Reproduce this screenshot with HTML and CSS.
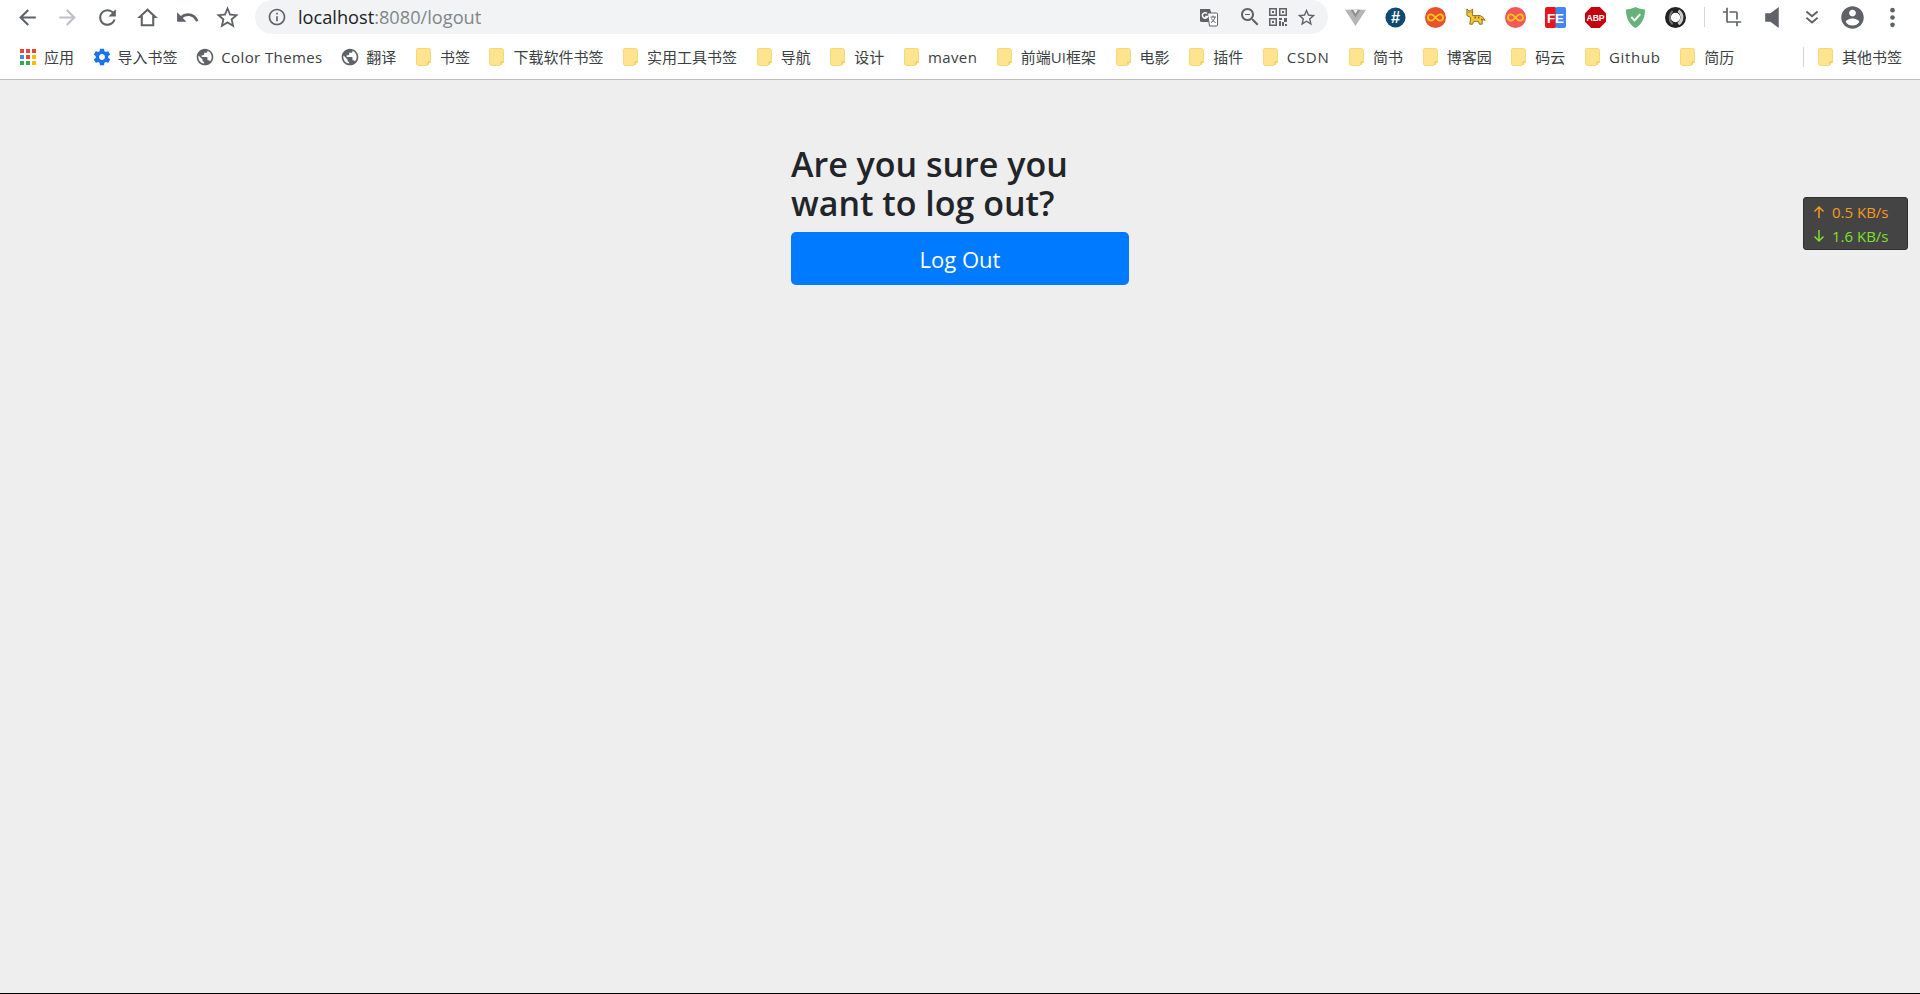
FILE: index.html
```html
<!DOCTYPE html>
<html lang="zh-CN">
<head>
<meta charset="utf-8">
<title>Log Out</title>
<link rel="stylesheet" href="styles.css">
</head>
<body>
<svg class="defs" width="0" height="0" aria-hidden="true">
  <defs>
    <symbol id="folder" viewBox="0 0 16 18">
      <path d="M1.500 .5h11a2 2 0 0 1 2 2v11l-3.500 4H2.500a2 2 0 0 1-2-2V1.500a1 1 0 0 1 1-1z" fill="#fee48f" stroke="#f8d775"/>
      <path d="M12 17v-3h3" fill="none" stroke="#f4cf62" stroke-width="1.400"/>
    </symbol>
    <symbol id="globe" viewBox="0 0 24 24">
      <path fill="#5f6368" d="M12 2C6.480 2 2 6.480 2 12s4.480 10 10 10 10-4.480 10-10S17.520 2 12 2zm-1 17.930c-3.950-.49-7-3.850-7-7.930 0-.62.08-1.210.21-1.790L9 15v1c0 1.100.9 2 2 2v1.930zm6.900-2.540c-.26-.81-1-1.390-1.900-1.390h-1v-3c0-.55-.45-1-1-1H8v-2h2c.55 0 1-.45 1-1V7h2c1.100 0 2-.9 2-2v-.41c2.930 1.190 5 4.060 5 7.410 0 2.080-.8 3.970-2.100 5.390z"/>
    </symbol>
    <symbol id="star" viewBox="0 0 24 24">
      <path fill="#5f6368" d="M22 9.240l-7.190-.62L12 2 9.190 8.630 2 9.240l5.460 4.730L5.820 21 12 17.270 18.180 21l-1.630-7.030L22 9.240zM12 15.400l-3.760 2.270 1-4.280-3.320-2.880 4.380-.38L12 6.100l1.710 4.040 4.380.38-3.320 2.880 1 4.280L12 15.400z"/>
    </symbol>
    <symbol id="inf" viewBox="0 0 20 20">
      <path fill="none" stroke="#f5c518" stroke-width="1.800" d="M10 10c-1.500-2-2.700-3-4.200-3a3 3 0 0 0 0 6c1.500 0 2.700-1 4.200-3s2.700-3 4.200-3a3 3 0 0 1 0 6c-1.500 0-2.700-1-4.200-3z"/>
    </symbol>
  </defs>
</svg>

<header class="chrome">
  <div class="toolbar">
    <div class="btn-group">
      <span class="tool"><svg class="ic25" viewBox="0 0 24 24"><path fill="#5f6368" d="M20 11H7.830l5.590-5.590L12 4l-8 8 8 8 1.410-1.410L7.830 13H20v-2z"/></svg></span>
      <span class="tool"><svg class="ic25" viewBox="0 0 24 24"><path fill="#bdc1c6" d="M20 11H7.830l5.590-5.590L12 4l-8 8 8 8 1.410-1.410L7.830 13H20v-2z" transform="matrix(-1 0 0 1 24 0)"/></svg></span>
      <span class="tool"><svg class="ic25" viewBox="0 0 24 24"><path fill="#5f6368" d="M17.650 6.350C16.200 4.900 14.210 4 12 4c-4.420 0-7.990 3.580-7.990 8s3.570 8 7.990 8c3.730 0 6.840-2.550 7.730-6h-2.080c-.82 2.330-3.040 4-5.650 4-3.310 0-6-2.690-6-6s2.690-6 6-6c1.660 0 3.140.69 4.220 1.780L13 11h7V4l-2.350 2.350z"/></svg></span>
      <span class="tool"><svg class="ic25" viewBox="0 0 24 24"><path fill="none" stroke="#5f6368" stroke-width="2" stroke-linejoin="miter" d="M12 4.500L4.500 11.500H6.500V19.500H17.500V11.500H19.500z"/></svg></span>
      <span class="tool"><svg class="ic25" viewBox="0 0 24 24"><path fill="#5f6368" d="M12.500 8c-2.650 0-5.050.99-6.900 2.600L2 7v9h9l-3.620-3.620c1.390-1.160 3.160-1.880 5.120-1.880 3.540 0 6.550 2.310 7.600 5.500l2.370-.78C21.080 11.030 17.150 8 12.500 8z"/></svg></span>
      <span class="tool"><svg class="ic27"><use href="#star"/></svg></span>
    </div>
    <div class="urlbar">
      <svg class="info" viewBox="0 0 24 24"><path fill="#5f6368" d="M11 7h2v2h-2zm0 4h2v6h-2zm1-9C6.480 2 2 6.480 2 12s4.480 10 10 10 10-4.480 10-10S17.520 2 12 2zm0 18c-4.410 0-8-3.590-8-8s3.590-8 8-8 8 3.590 8 8-3.590 8-8 8z"/></svg>
      <span class="url"><span class="host">localhost</span>:8080/logout</span>
      <span class="url-icons">
        <svg class="translate" viewBox="0 0 20 20">
          <path fill="#5f6368" d="M1 2h10l1 3v10H2.500A1.500 1.500 0 0 1 1 13.500z"/>
          <path fill="#fff" stroke="#5f6368" d="M8.500 6h9a1 1 0 0 1 1 1v11a1 1 0 0 1-1 1h-7z"/>
          <path fill="none" stroke="#fff" stroke-width="1.500" d="M8 6.500a2.700 2.700 0 1 0 .6 3H6.200"/>
          <path fill="none" stroke="#5f6368" d="M11.500 10h5.500M14 8.500v1.500M16 10c-.5 2.500-2 4.500-4 5.500M12.500 11.500c.8 1.700 2 3 4 4"/>
        </svg>
        <svg class="zoomout" viewBox="0 0 24 24"><path fill="#5f6368" d="M15.500 14h-.79l-.28-.27C15.410 12.590 16 11.110 16 9.500 16 5.910 13.090 3 9.500 3S3 5.910 3 9.500 5.910 16 9.500 16c1.610 0 3.090-.59 4.230-1.570l.27.280v.79l5 4.990L20.490 19l-4.990-5zm-6 0C7.010 14 5 11.990 5 9.500S7.010 5 9.500 5 14 7.010 14 9.500 11.990 14 9.500 14zM7 9h5v1H7z"/></svg>
        <svg class="qr" viewBox="0 0 18 18">
          <path fill="#5f6368" fill-rule="evenodd" d="M0 0h8v8H0zM1.500 1.500v5h5v-5zM10 0h8v8h-8zM11.500 1.500v5h5v-5zM0 10h8v8H0zM1.500 11.500v5h5v-5z"/>
          <path fill="#5f6368" d="M3 3h2v2H3zM13 3h2v2h-2zM3 13h2v2H3zM10 10h3v2h-3zM15 10h3v4h-3zM10 13h2v5h-2zM13 14h2v4h-2zM16 16h2v2h-2z"/>
        </svg>
        <svg class="ic21"><use href="#star"/></svg>
      </span>
    </div>
    <div class="btn-group">
      <span class="tool"><svg class="ext" viewBox="0 0 22 22"><path fill="#b5b5b5" d="M0 3h22L11 20z"/><path fill="#8d8d8d" d="M6 3h10l-5 8z"/><path fill="#eee" d="M8.500 3h5L11 7z"/></svg></span>
      <span class="tool"><svg class="ext" viewBox="0 0 22 22"><circle cx="11" cy="11" r="10.500" fill="#0f4a70"/><text x="11" y="16.500" text-anchor="middle" class="ext-hash">#</text></svg></span>
      <span class="tool"><svg class="ext" viewBox="0 0 20 20"><circle cx="10" cy="10" r="10" fill="#e8502e"/><use href="#inf" width="20" height="20"/></svg></span>
      <span class="tool"><svg class="ext" viewBox="0 0 22 22">
        <path fill="#f5c92e" stroke="#8a6a2a" d="M2 2l2 2h2l2-2v7h8l3 2 2 3-3-1v5h-3l-1-3H9l-1 3H5l1-7-4-2z"/>
        <path fill="#8a5a20" d="M3.500 5h1v1h-1zM6 5h1v1H6zM10 10h1.500v2H10zM13.500 10H15v2h-1.500zM17 12h1v2h-1z"/>
      </svg></span>
      <span class="tool"><svg class="ext" viewBox="0 0 20 20"><circle cx="10" cy="10" r="10" fill="#f1585a"/><use href="#inf" width="20" height="20"/></svg></span>
      <span class="tool"><svg class="ext" viewBox="0 0 22 22"><rect x="0" y="0" width="12" height="22" rx="2" fill="#e8151c"/><rect x="11" y="0" width="11" height="22" rx="2" fill="#4285f4"/><text x="11" y="17" text-anchor="middle" class="ext-fe">FE</text></svg></span>
      <span class="tool"><svg class="ext" viewBox="0 0 22 22"><path fill="#c4010c" d="M6.500 0h9L22 6.500v9L15.500 22h-9L0 15.500v-9z"/><text x="11" y="14.500" text-anchor="middle" class="ext-abp">ABP</text></svg></span>
      <span class="tool"><svg class="ext" viewBox="0 0 22 22"><path fill="#67b279" d="M11 0c3 1.500 7 2.500 10 2.500 0 8-2.500 15-10 19.500C3.500 17.500 1 10.500 1 2.500 4 2.500 8 1.500 11 0z"/><path fill="none" stroke="#fff" stroke-width="2" d="M6.500 10.500l3.500 3.500 6-6.500"/></svg></span>
      <span class="tool"><svg class="ext" viewBox="0 0 22 22"><circle cx="11" cy="11" r="8" fill="none" stroke="#222" stroke-width="6"/><path fill="none" stroke="#ccc" stroke-width="3" d="M14 4c5 3 5 10 0 14"/><path fill="none" stroke="#777" stroke-width="2" d="M8 18c-4-3-4-10 0-14"/></svg></span>
    </div>
    <span class="tool-sep"></span>
    <div class="btn-group">
      <span class="tool"><svg class="ic20" viewBox="0 0 24 24"><path fill="#5f6368" d="M17 15h2V7c0-1.100-.9-2-2-2H9v2h8v8zM7 17V1H5v4H1v2h4v10c0 1.100.9 2 2 2h10v4h2v-4h4v-2H7z"/></svg></span>
      <span class="tool"><svg class="ic25" viewBox="0 0 24 24"><path fill="#5f6368" d="M18 2v20l-8-6H5V8h5z"/></svg></span>
      <span class="tool"><svg class="ic16" viewBox="0 0 20 20"><path fill="none" stroke="#5f6368" stroke-width="2.400" d="M3 3l7 6 7-6M3 11l7 6 7-6"/></svg></span>
      <span class="tool"><svg class="ic27" viewBox="0 0 24 24"><path fill="#5f6368" d="M12 2C6.480 2 2 6.480 2 12s4.480 10 10 10 10-4.480 10-10S17.520 2 12 2zm0 3c1.660 0 3 1.340 3 3s-1.340 3-3 3-3-1.340-3-3 1.340-3 3-3zm0 14.200c-2.500 0-4.710-1.280-6-3.220.03-1.990 4-3.080 6-3.080 1.990 0 5.970 1.090 6 3.080-1.290 1.940-3.500 3.220-6 3.220z"/></svg></span>
      <span class="tool"><svg class="ic21" viewBox="0 0 20 20"><circle cx="10" cy="3" r="2.200" fill="#5f6368"/><circle cx="10" cy="10" r="2.200" fill="#5f6368"/><circle cx="10" cy="17" r="2.200" fill="#5f6368"/></svg></span>
    </div>
  </div>

  <nav class="bookmarks">
    <span class="bm"><svg class="bm-ic" viewBox="0 0 16 16">
      <path fill="#ea4335" d="M0 0h4v4H0zM6 0h4v4H6zM12 0h4v4h-4z"/>
      <path fill="#4285f4" d="M0 6h4v4H0z"/><path fill="#ea4335" d="M6 6h4v4H6z"/><path fill="#fbbc05" d="M12 6h4v4h-4z"/>
      <path fill="#34a853" d="M0 12h4v4H0zM6 12h4v4H6z"/><path fill="#fbbc05" d="M12 12h4v4h-4z"/>
    </svg>应用</span>
    <span class="bm"><svg class="bm-wide" viewBox="0 0 24 24"><path fill="#1a73e8" d="M19.430 12.980c.04-.32.07-.64.07-.98s-.03-.66-.07-.98l2.110-1.650c.19-.15.24-.42.12-.64l-2-3.460c-.12-.22-.39-.3-.61-.22l-2.490 1c-.52-.4-1.080-.73-1.690-.98l-.38-2.650C14.460 2.180 14.250 2 14 2h-4c-.25 0-.46.18-.49.420l-.38 2.650c-.61.25-1.170.59-1.690.98l-2.490-1c-.23-.09-.49 0-.61.22l-2 3.460c-.13.22-.07.49.12.64l2.110 1.650c-.04.32-.07.65-.07.98s.03.66.07.98l-2.110 1.650c-.19.15-.24.42-.12.64l2 3.460c.12.22.39.3.61.22l2.490-1c.52.4 1.080.73 1.690.98l.38 2.650c.03.24.24.42.49.42h4c.25 0 .46-.18.49-.42l.38-2.650c.61-.25 1.170-.59 1.690-.98l2.490 1c.23.09.49 0 .61-.22l2-3.460c.12-.22.07-.49-.12-.64l-2.110-1.650zM12 15.500c-1.930 0-3.500-1.570-3.500-3.500s1.570-3.500 3.500-3.500 3.500 1.570 3.500 3.500-1.570 3.500-3.500 3.500z"/></svg>导入书签</span>
    <span class="bm bm-latin"><svg class="bm-wide"><use href="#globe"/></svg>Color Themes</span>
    <span class="bm"><svg class="bm-wide"><use href="#globe"/></svg>翻译</span>
    <span class="bm"><svg class="bm-ic"><use href="#folder"/></svg>书签</span>
    <span class="bm"><svg class="bm-ic"><use href="#folder"/></svg>下载软件书签</span>
    <span class="bm"><svg class="bm-ic"><use href="#folder"/></svg>实用工具书签</span>
    <span class="bm"><svg class="bm-ic"><use href="#folder"/></svg>导航</span>
    <span class="bm"><svg class="bm-ic"><use href="#folder"/></svg>设计</span>
    <span class="bm bm-latin"><svg class="bm-ic"><use href="#folder"/></svg>maven</span>
    <span class="bm"><svg class="bm-ic"><use href="#folder"/></svg>前端UI框架</span>
    <span class="bm"><svg class="bm-ic"><use href="#folder"/></svg>电影</span>
    <span class="bm"><svg class="bm-ic"><use href="#folder"/></svg>插件</span>
    <span class="bm bm-caps"><svg class="bm-ic"><use href="#folder"/></svg>CSDN</span>
    <span class="bm"><svg class="bm-ic"><use href="#folder"/></svg>简书</span>
    <span class="bm"><svg class="bm-ic"><use href="#folder"/></svg>博客园</span>
    <span class="bm"><svg class="bm-ic"><use href="#folder"/></svg>码云</span>
    <span class="bm bm-caps"><svg class="bm-ic"><use href="#folder"/></svg>Github</span>
    <span class="bm"><svg class="bm-ic"><use href="#folder"/></svg>简历</span>
    <span class="bm bm-other"><svg class="bm-ic"><use href="#folder"/></svg>其他书签</span>
  </nav>
</header>

<main class="page">
  <form class="logout">
    <h1 class="logout-title">Are you sure you want to log out?</h1>
    <button class="logout-btn" type="button">Log Out</button>
  </form>
  <aside class="speed">
    <div class="speed-row speed-up"><svg class="speed-arrow" viewBox="0 0 12 14"><path fill="none" stroke="currentColor" stroke-width="1.500" d="M6 13V2M1.500 6.500L6 2l4.500 4.500"/></svg>0.5 KB/s</div>
    <div class="speed-row speed-down"><svg class="speed-arrow" viewBox="0 0 12 14"><path fill="none" stroke="currentColor" stroke-width="1.500" d="M6 1v11M1.500 7.500L6 12l4.500-4.500"/></svg>1.6 KB/s</div>
  </aside>
</main>
</body>
</html>
```
FILE: styles.css
```css
* { box-sizing: border-box; }
html, body { height: 100%; margin: 0; }
body {
  display: flex;
  flex-direction: column;
  background: #eee;
  border-bottom: 1px solid #000;
  font-family: "Open Sans", "Noto Sans CJK SC", sans-serif;
  overflow: hidden;
}
.defs { position: absolute; }

.chrome {
  flex: none;
  height: 80px;
  background: #fff;
  border-bottom: 1px solid #bfbfbf;
}
.toolbar {
  display: flex;
  align-items: center;
  height: 34px;
  padding: 0 8px 0 7px;
}
.btn-group { display: flex; flex: none; }
.tool {
  display: flex;
  align-items: center;
  justify-content: center;
  width: 40px;
  height: 34px;
}
.tool-sep {
  flex: none;
  width: 1px;
  height: 20px;
  margin: 0 7px 0 9px;
  background: #d5d5d5;
}
.ic25 { width: 25px; height: 25px; }
.ic27 { width: 27px; height: 27px; }
.ic21 { width: 21px; height: 21px; }
.ic20 { width: 20px; height: 20px; }
.ic16 { width: 16px; height: 16px; }
.ext { width: 21px; height: 21px; }
.ext-hash { font: 700 17px "Liberation Sans", sans-serif; fill: #fff; }
.ext-fe { font: 700 14px "Liberation Sans", sans-serif; fill: #fff; }
.ext-abp { font: 700 9px "Liberation Sans", sans-serif; fill: #fff; }

.urlbar {
  flex: 1;
  display: flex;
  align-items: center;
  height: 34px;
  margin: 0 7px 0 8px;
  padding: 0 11px 0 12px;
  background: #f1f3f4;
  border-radius: 17px;
}
.info { flex: none; width: 20px; height: 20px; }
.url {
  margin-left: 11px;
  font-size: 18.2px;
  color: #80868b;
  white-space: nowrap;
}
.host { color: #202124; }
.url-icons {
  display: flex;
  align-items: center;
  margin-left: auto;
}
.translate { width: 20px; height: 20px; margin-right: 19px; }
.zoomout { width: 24px; height: 24px; margin-right: 7px; }
.qr { width: 18px; height: 18px; margin-right: 9px; }

.bookmarks {
  display: flex;
  align-items: center;
  height: 45px;
  padding: 0 18px 0 20px;
  gap: 19.6px;
  font-size: 15px;
  color: #3c4043;
  white-space: nowrap;
}
.bm { display: flex; align-items: center; gap: 8px; }
.bm-latin { letter-spacing: .4px; }
.bm-caps { letter-spacing: .7px; }
.bm-ic { flex: none; width: 16px; height: 18px; }
.bm-wide { flex: none; width: 20px; height: 20px; margin: 0 -2px; }
.bm-other {
  margin-left: auto;
  height: 20px;
  padding-left: 14px;
  border-left: 1px solid #d5d5d5;
}

.page {
  flex: 1;
  position: relative;
  background: #eee;
  padding-top: 65px;
}
.logout {
  display: flex;
  flex-direction: column;
  width: 338px;
  margin: 0 auto;
}
.logout-title {
  margin: 0 0 9px;
  font-size: 34px;
  font-weight: 600;
  line-height: 39px;
  color: #212529;
}
.logout-btn {
  height: 53px;
  padding: 0;
  border: 0;
  border-radius: 5px;
  background: #007bff;
  color: #fff;
  font: 400 22px "Open Sans", sans-serif;
}
.speed {
  position: absolute;
  top: 117px;
  right: 12px;
  width: 105px;
  height: 53px;
  padding: 2px 0 0 9px;
  background: #444;
  border: 1px solid #2f2f2f;
  border-radius: 3px;
  font-size: 15px;
  line-height: 24px;
}
.speed-row { display: flex; align-items: center; gap: 7px; }
.speed-arrow { width: 12px; height: 14px; }
.speed-up { color: #f59a1b; }
.speed-down { color: #7fe028; }
```
